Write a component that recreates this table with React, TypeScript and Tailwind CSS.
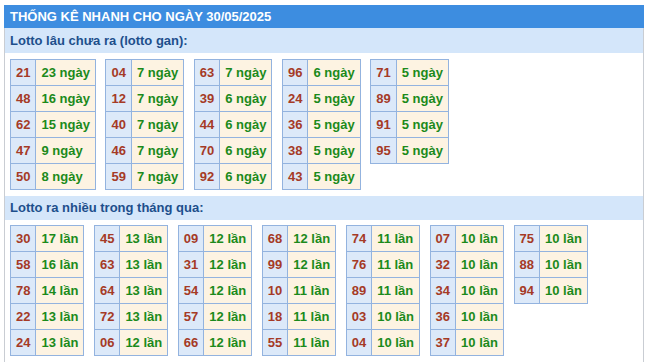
type Row = [string, string];

const gan: Row[][] = [
  [["21", "23 ngày"], ["48", "16 ngày"], ["62", "15 ngày"], ["47", "9 ngày"], ["50", "8 ngày"]],
  [["04", "7 ngày"], ["12", "7 ngày"], ["40", "7 ngày"], ["46", "7 ngày"], ["59", "7 ngày"]],
  [["63", "7 ngày"], ["39", "6 ngày"], ["44", "6 ngày"], ["70", "6 ngày"], ["92", "6 ngày"]],
  [["96", "6 ngày"], ["24", "5 ngày"], ["36", "5 ngày"], ["38", "5 ngày"], ["43", "5 ngày"]],
  [["71", "5 ngày"], ["89", "5 ngày"], ["91", "5 ngày"], ["95", "5 ngày"]],
];

const nhieu: Row[][] = [
  [["30", "17 lần"], ["58", "16 lần"], ["78", "14 lần"], ["22", "13 lần"], ["24", "13 lần"]],
  [["45", "13 lần"], ["63", "13 lần"], ["64", "13 lần"], ["72", "13 lần"], ["06", "12 lần"]],
  [["09", "12 lần"], ["31", "12 lần"], ["54", "12 lần"], ["57", "12 lần"], ["66", "12 lần"]],
  [["68", "12 lần"], ["99", "12 lần"], ["10", "11 lần"], ["18", "11 lần"], ["55", "11 lần"]],
  [["74", "11 lần"], ["76", "11 lần"], ["89", "11 lần"], ["03", "10 lần"], ["04", "10 lần"]],
  [["07", "10 lần"], ["32", "10 lần"], ["34", "10 lần"], ["36", "10 lần"], ["37", "10 lần"]],
  [["75", "10 lần"], ["88", "10 lần"], ["94", "10 lần"]],
];

function LotoTable({ rows }: { rows: Row[] }) {
  return (
    <table className="border-collapse">
      <tbody>
        {rows.map(([num, val]) => (
          <tr key={num} className="h-[26px]">
            <td className="border border-[#93b3df] bg-[#dce9f9] px-[5px] text-[#a53a26]">{num}</td>
            <td className="border border-[#93b3df] bg-[#fdf3e2] px-[5px] text-[#1b8a1b]">{val}</td>
          </tr>
        ))}
      </tbody>
    </table>
  );
}

export default function App() {
  return (
    <div className="min-h-[362px] bg-white pt-[5px] pl-[4px] font-['Liberation_Sans',Arial,sans-serif] text-[13px] font-bold">
      <div className="w-[640px]">
        <div className="h-[23px] bg-[#3d8de0] pl-[6px] leading-[23px] text-white">
          THỐNG KÊ NHANH CHO NGÀY 30/05/2025
        </div>
        <div className="border-x border-[#c9cdd3] pb-4">
          <div className="h-[25px] bg-[#d4e6fa] pl-[5px] leading-[25px] text-[#1d4f8c]">
            Lotto lâu chưa ra (lotto gan):
          </div>
          <div className="flex items-start gap-[9.6px] px-[5px] pt-[6px] pb-[6px]">
            {gan.map((t, i) => (
              <LotoTable key={i} rows={t} />
            ))}
          </div>
          <div className="h-[24px] bg-[#d4e6fa] pl-[5px] leading-[24px] text-[#1d4f8c]">
            Lotto ra nhiều trong tháng qua:
          </div>
          <div className="flex items-start gap-[9.6px] px-[5px] pt-[5px]">
            {nhieu.map((t, i) => (
              <LotoTable key={i} rows={t} />
            ))}
          </div>
        </div>
      </div>
    </div>
  );
}
